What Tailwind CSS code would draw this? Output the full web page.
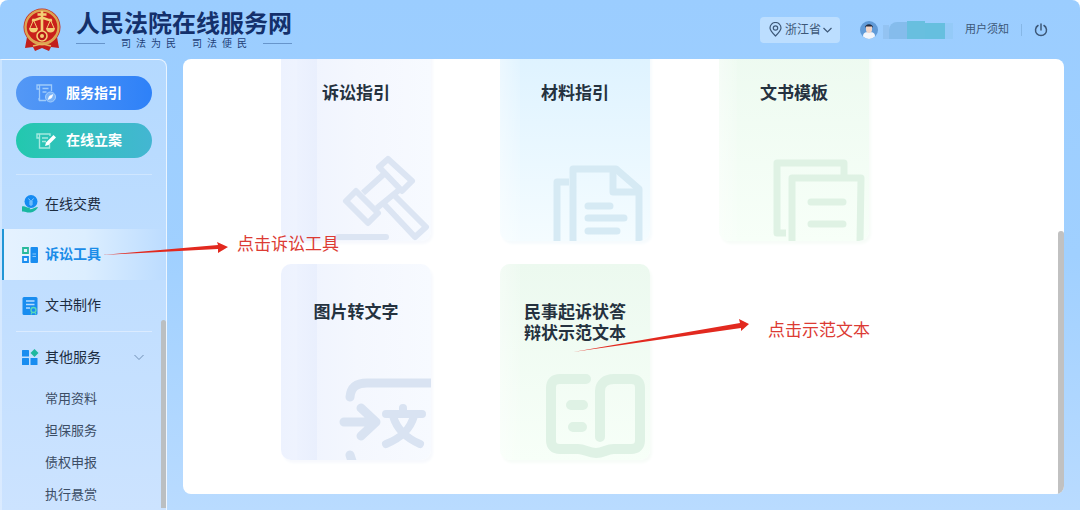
<!DOCTYPE html>
<html lang="zh-CN">
  <head>
    <meta charset="UTF-8" />
    <meta name="viewport" content="width=device-width, initial-scale=1.0" />
    <title>人民法院在线服务网</title>
    <script src="https://cdn.jsdelivr.net/npm/@tailwindcss/browser@4"></script>
  </head>
  <body class="bg-white font-['Liberation_Sans','Noto_Sans_CJK_SC',sans-serif]">
    <div class="relative flex h-screen flex-col overflow-hidden rounded-t-lg bg-linear-to-b from-[#9bcdff] via-[#a0d0ff] to-[#b9dbff]">
      <!-- Header -->
      <header class="flex h-[59px] shrink-0 items-center justify-between pr-8 pl-[22px]">
        <a href="#" class="flex items-center gap-[14px]">
          <svg class="h-[44px] w-[40px]" viewBox="0 0 40 44" fill="none">
            <path d="M5 29l-2 11 8-1 2 4 7-3 7 3 2-4 8 1-2-11z" fill="#c2201c" />
            <circle cx="20" cy="19" r="18.500" fill="#c62a20" />
            <circle cx="20" cy="19" r="16.500" fill="#c9201b" stroke="#dca552" stroke-width="2.400" />
            <path d="M20 3v24M15.500 6.500h9M10 12c4 1 6-2 10-2s6 3 10 2" stroke="#f3cf74" stroke-width="2.600" />
            <path d="M11.500 12L8 20M11.500 12l3.500 8M28.500 12L25 20M28.500 12l3.500 8" stroke="#f3cf74" stroke-width="1" />
            <path d="M7 20h9c0 6-9 6-9 0zM24 20h9c0 6-9 6-9 0z" fill="#f3cf74" />
            <path d="M6 28c4 6 9 8 14 8s10-2 14-8" stroke="#dca552" stroke-width="2.400" />
            <circle cx="20" cy="28" r="5" fill="#b91a18" stroke="#f3cf74" stroke-width="1.600" />
            <circle cx="20" cy="28" r="2" fill="#f3cf74" />
            <path d="M11 38l6-1.500h6l6 1.500" stroke="#e6b45c" stroke-width="1.500" />
          </svg>
          <span class="flex flex-col">
            <span class="text-[24px] leading-[28px] font-bold text-[#14306b]">人民法院在线服务网</span>
            <span class="flex items-center justify-between text-[10px] leading-[12px] text-[#1f3f78]">
              <span class="h-px w-[29px] bg-[#6795cb]"></span>
              <span class="flex gap-[5px]"><span>司</span><span>法</span><span>为</span><span>民</span></span>
              <span class="flex gap-[5px]"><span>司</span><span>法</span><span>便</span><span>民</span></span>
              <span class="h-px w-[29px] bg-[#6795cb]"></span>
            </span>
          </span>
        </a>

        <div class="flex items-center text-[12px] text-[#3d5878]">
          <button type="button" class="mr-5 flex h-[26px] items-center gap-[2px] rounded bg-[#bcdeff] px-2">
            <svg class="h-[15px] w-[15px]" viewBox="0 0 15 15" fill="none" stroke="currentColor" stroke-width="1.200">
              <path d="M7.500 14C4 10.500 2 8.500 2 6a5.500 5.500 0 0 1 11 0c0 2.500-2 4.500-5.500 8z" />
              <circle cx="7.500" cy="6" r="2.200" />
            </svg>
            <span>浙江省</span>
            <svg class="h-2 w-[9px]" viewBox="0 0 9 8" fill="none" stroke="currentColor" stroke-width="1.200"><path d="M.5 2l4 4 4-4" /></svg>
          </button>
          <svg class="mr-[5px] h-[18px] w-[18px]" viewBox="0 0 18 18">
            <circle cx="9" cy="9" r="9" fill="#619bd8" />
            <path d="M3 15.500c0-4 3-4.500 6-4.500s6 .5 6 4.500A9 9 0 0 1 9 18a9 9 0 0 1-6-2.500z" fill="#f4f6fb" />
            <path d="M6 5h6v4c0 4-6 4-6 0z" fill="#f1d4c6" />
            <path d="M5 7c-.5-5 8.500-5 8 0l-1-1.500H6z" fill="#232b40" />
          </svg>
          <span class="mr-3 flex h-[18px] items-end">
            <span class="h-[14px] w-[6px] bg-[#93c3f2]"></span>
            <span class="h-[17px] w-[18px] rounded-tl-lg bg-[#85bcec]"></span>
            <span class="h-[18px] w-[18px] bg-[#68bfdf]"></span>
            <span class="h-[16px] w-[20px] bg-[#66bfdf]"></span>
            <span class="h-[16px] w-[8px] bg-[#94caf8]"></span>
          </span>
          <a href="#" class="text-[11px]">用户须知</a>
          <span class="mx-3 h-3 w-px bg-[#86b7e6]"></span>
          <button type="button" aria-label="退出">
            <svg class="h-[14px] w-[14px]" viewBox="0 0 14 14" fill="none" stroke="#3d5878" stroke-width="1.500" stroke-linecap="round">
              <path d="M7 1v6M4 2.500a5.500 5.500 0 1 0 6 0" />
            </svg>
          </button>
        </div>
      </header>

      <div class="flex min-h-0 grow">
        <!-- Sidebar -->
        <aside class="relative mr-4 flex w-[167px] shrink-0 flex-col overflow-hidden rounded-tr-lg border-t border-r border-l-2 border-white/70 border-l-white/30 bg-linear-to-b from-[#b4d9ff] to-[#cce3ff] text-[14px] text-[#1c2c3f]">
          <div class="mx-[14px] flex flex-col gap-[13px] border-b border-[#cfe6ff] pt-4 pb-4 text-[14px] font-bold text-white">
            <button type="button" class="flex h-[34px] items-center gap-[10px] rounded-full bg-linear-to-r from-[#5498f5] to-[#2e81f8] pl-5">
              <svg class="h-5 w-5" viewBox="0 0 20 20" fill="none" stroke="#9fcbfa" stroke-width="1.300">
                <path d="M3 17.500V15M3 17.500h7M3.500 17V2h12v6M3.500 2H1v4h2.500" />
                <path d="M6.500 5.500h6M6.500 9h4" />
                <circle cx="14.500" cy="14" r="5" fill="#78b2f8" stroke="#a5cefc" stroke-width="1" />
                <path d="M12 16.500l1.500-3.500 3.500-1.500-1.500 3.500z" fill="#fff" stroke="#fff" stroke-width=".5" />
              </svg>
              服务指引
            </button>
            <button type="button" class="flex h-[35px] items-center gap-[10px] rounded-full bg-linear-to-r from-[#22c8ae] to-[#43b6d2] pl-5">
              <svg class="h-5 w-5" viewBox="0 0 20 20" fill="none" stroke="#a4e9df" stroke-width="1.400">
                <path d="M14 5V3H1v4h2.500M3.500 3v14h10v-4" />
                <path d="M6 7h6M6 10.500h4" />
                <path d="M9 15l1-3.500L17.500 4 20 6.500 12.500 14z" fill="#fff" stroke="none" />
              </svg>
              在线立案
            </button>
          </div>

          <nav class="flex flex-col">
            <a href="#" class="mt-1 flex h-[50px] items-center gap-[7px] pl-5">
              <svg class="h-[18px] w-4" viewBox="0 0 16 18" fill="none">
                <circle cx="9" cy="6.500" r="6.500" fill="#168bf2" />
                <path d="M6.500 3.500L9 6.500l2.500-3M9 6.500V11M7 7h4M7 9h4" stroke="#8accff" stroke-width="1" />
                <path d="M0 11.500c3-1 4 1 7 1.200 2 0 1.500 1.300-.5 1.300 4 .8 5-1.500 9.500-2-1.500 3.500-5 5.500-9 5.500-3 0-4-1.500-7-1z" fill="#19b7a0" />
              </svg>
              在线交费
            </a>
            <a href="#" class="-ml-[2px] flex h-[51px] items-center gap-[7px] border-l-4 border-[#2196d6] bg-linear-to-r from-[#e5f2ff] via-[#dceeff] to-[#bcdcff] pl-[18px] font-bold text-[#1a8ce8]">
              <svg class="h-4 w-4" viewBox="0 0 16 16" fill="none">
                <path d="M1 1h5v5H1z" stroke="#27b99b" stroke-width="1.800" />
                <path d="M1 10h5v5H1z" stroke="#198df0" stroke-width="1.800" />
                <rect x="8.500" width="7.500" height="16" rx="1" fill="#198df0" />
                <path d="M10.500 7h3.500M10.500 9.500h3.500" stroke="#8ac8fa" stroke-width="1" />
              </svg>
              诉讼工具
            </a>
            <a href="#" class="flex h-[51px] items-center gap-[7px] pl-5">
              <svg class="h-[18px] w-4" viewBox="0 0 16 18" fill="none">
                <rect x=".5" width="15" height="18" rx="1.500" fill="#198df0" />
                <path d="M4 4h8.500M4 7.500h8.500M4 11h4" stroke="#b5dcff" stroke-width="1.300" />
                <circle cx="11.500" cy="13" r="2.500" fill="#198df0" stroke="#5adab8" stroke-width="1.300" />
                <path d="M10 15.500l-1 2M13 15.500l1 2" stroke="#5adab8" stroke-width="1.200" />
              </svg>
              文书制作
            </a>
            <button type="button" class="mx-[14px] flex h-[51px] items-center gap-[6px] border-t border-[#dbebff] pl-[6px]">
              <svg class="h-4 w-[17px]" viewBox="0 0 17 16">
                <rect x="0" y="1" width="7" height="6.500" rx=".5" fill="#198df0" />
                <rect x="0" y="9" width="7" height="7" rx=".5" fill="#198df0" />
                <rect x="8.500" y="9" width="7" height="7" rx=".5" fill="#198df0" />
                <path d="M12.500 0L16.500 4l-4 4-4-4z" fill="#20b89e" />
              </svg>
              其他服务
              <svg class="mr-2 ml-auto h-[10px] w-[10px]" viewBox="0 0 10 10" fill="none" stroke="#7190b5" stroke-width="1"><path d="M.5 3L5 7.500 9.500 3" /></svg>
            </button>
            <ul class="pt-px pl-[43px] text-[13px] leading-[32px] text-[#3c4d65]">
              <li><a href="#">常用资料</a></li>
              <li><a href="#">担保服务</a></li>
              <li><a href="#">债权申报</a></li>
              <li><a href="#">执行悬赏</a></li>
            </ul>
          </nav>
          <div class="absolute right-0 bottom-[2px] h-[188px] w-[5px] rounded-t-sm bg-[#bbbfc2]"></div>
        </aside>

        <!-- Tool cards, scrolled to the end -->
        <main class="relative mr-4 mb-4 flex grow flex-col justify-end overflow-hidden rounded-lg bg-white pb-[34px] pl-[98px]">
          <div class="grid grid-cols-[repeat(auto-fill,150px)] gap-x-[69px] gap-y-[23px] text-center text-[17px] leading-[21px] font-bold text-[#25323f]">
            <a href="#" class="relative h-[196px] overflow-hidden rounded-[10px] bg-linear-to-r from-[#edf2fe] via-[#f4f7fe] to-[#f7faff] pt-[38px] shadow-[2px_3px_3px_#f7f9fd]">
              <span class="absolute inset-y-0 left-[16px] w-[20px] bg-linear-to-r from-[#edf2fe] to-[#e9effd]"></span>
              <span class="relative">诉讼指引</span>
              <svg class="absolute right-0 bottom-0 h-[96px] w-[110px]" viewBox="0 0 110 96" fill="none" stroke="#dce5f3" stroke-width="6" stroke-linejoin="round">
                <path d="M17 92h48" stroke-linecap="round" />
                <path d="M67 14l24 22-10 10-23-24zM35 46l22 22-10 10-22-22zM42 48l21-19M56 63l22-18" />
                <path d="M63 59l31 33 11-10-32-32" />
              </svg>
            </a>
            <a href="#" class="relative h-[196px] overflow-hidden rounded-[10px] bg-linear-to-b from-[#ddf2ff] to-[#f4fcff] pt-[38px] shadow-[2px_3px_3px_#f6fbfd]">
              <span class="absolute inset-y-0 left-0 w-[20px] bg-linear-to-r from-white/40 to-white/10"></span>
              <span class="relative">材料指引</span>
              <svg class="absolute right-0 bottom-0 h-[80px] w-[100px]" viewBox="0 0 100 80" fill="none" stroke="#d6eaf4" stroke-width="7" stroke-linejoin="round">
                <path d="M7 82V21h12" />
                <path d="M23 82V8h43l23 20v56" />
                <path d="M63 9v22h25" />
                <path d="M38 45h22M38 57h36M38 70h29" stroke-linecap="round" />
              </svg>
            </a>
            <a href="#" class="relative h-[196px] overflow-hidden rounded-[10px] bg-linear-to-b from-[#edfaf0] to-[#f7fff8] pt-[38px] shadow-[2px_3px_3px_#f7fcf8]">
              <span class="absolute inset-y-0 left-0 w-[18px] bg-linear-to-r from-white/40 to-white/10"></span>
              <span class="relative">文书模板</span>
              <svg class="absolute right-0 bottom-0 h-[84px] w-[100px]" viewBox="0 0 100 84" fill="none" stroke="#dff2e4" stroke-width="7" stroke-linejoin="round">
                <path d="M17 76H8V6h67v14" />
                <path d="M23 84V21h69l-1 65" />
                <path d="M42 45h32M42 67h32" stroke-linecap="round" />
              </svg>
            </a>
            <a href="#" class="relative h-[196px] overflow-hidden rounded-[10px] bg-linear-to-r from-[#edf2fe] via-[#f4f7fe] to-[#f7faff] pt-[38px] shadow-[2px_3px_3px_#f7f9fd]">
              <span class="absolute inset-y-0 left-[16px] w-[20px] bg-linear-to-r from-[#edf2fe] to-[#e9effd]"></span>
              <span class="relative">图片转文字</span>
              <svg class="absolute right-0 bottom-0 h-[84px] w-[100px]" viewBox="0 0 100 84" fill="none" stroke="#d9e3f2" stroke-width="9" stroke-linecap="round" stroke-linejoin="round">
                <path d="M19 21C20 10 27 7 36 7h70M19 79l3 9" />
                <path d="M13 46h32M30 32l15 14-15 14" />
                <path d="M55 38h36M72 32v6M62 40c4 14 13 22 27 28M83 40c-4 14-13 22-28 28" stroke-width="8" />
              </svg>
            </a>
            <a href="#" class="relative h-[196px] overflow-hidden rounded-[10px] bg-linear-to-b from-[#ecf9ef] to-[#f7fff8] pt-[38px] shadow-[2px_3px_3px_#f7fcf8]">
              <span class="absolute inset-y-0 left-0 w-[20px] bg-linear-to-r from-white/40 to-white/10"></span>
              <span class="relative">民事起诉状答<br />辩状示范文本</span>
              <svg class="absolute right-0 bottom-0 h-[90px] w-[110px]" viewBox="0 0 110 90" fill="none" stroke="#dff2e5" stroke-width="10" stroke-linecap="round" stroke-linejoin="round">
                <path d="M46 9H20c-6 0-9 3-9 9v52c0 6 3 9 9 9h18c7 0 10 4 18 4s10-4 18-4h17c6 0 9-3 9-9V18c0-6-3-9-9-9H74c-9 0-14 5-14 12v46" />
                <path d="M31 35h12M33 57h9" />
              </svg>
            </a>
          </div>
          <div class="absolute right-0 bottom-0 h-[263px] w-[6px] rounded-t-full bg-[#c1c1c1]"></div>
        </main>
      </div>

      <!-- Annotations laid over the page -->
      <svg class="pointer-events-none absolute top-0 left-0 h-[510px] w-[1080px]" viewBox="0 0 1080 510" fill="#e2291f">
        <path d="M102 255L218 245l-1-3 11 5-10 6v-4z" />
        <path d="M573 352l167-29-1-4 10 5-8 7v-3z" />
      </svg>
      <p class="absolute top-[233px] left-[237px] text-[17px] leading-6 text-[#dc3b34]">点击诉讼工具</p>
      <p class="absolute top-[319px] left-[768px] text-[17px] leading-6 text-[#dc3b34]">点击示范文本</p>
    </div>
  </body>
</html>
